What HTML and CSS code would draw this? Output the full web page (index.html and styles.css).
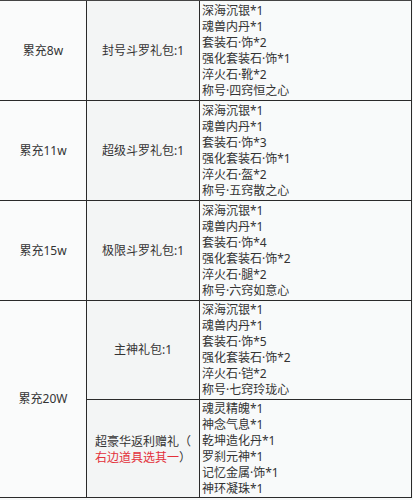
FILE: index.html
```html
<!DOCTYPE html>
<html lang="zh-CN">
<head>
<meta charset="utf-8">
<link rel="stylesheet" href="styles.css">
</head>
<body>
<div class="sheet">
  <div class="cell tier">累充8w</div>
  <div class="cell pack">封号斗罗礼包:1</div>
  <div class="cell items">
    <div>深海沉银*1</div>
    <div>魂兽内丹*1</div>
    <div>套装石·饰*2</div>
    <div>强化套装石·饰*1</div>
    <div>淬火石·靴*2</div>
    <div>称号·四窍恒之心</div>
  </div>

  <div class="cell tier">累充11w</div>
  <div class="cell pack">超级斗罗礼包:1</div>
  <div class="cell items">
    <div>深海沉银*1</div>
    <div>魂兽内丹*1</div>
    <div>套装石·饰*3</div>
    <div>强化套装石·饰*1</div>
    <div>淬火石·盔*2</div>
    <div>称号·五窍散之心</div>
  </div>

  <div class="cell tier">累充15w</div>
  <div class="cell pack">极限斗罗礼包:1</div>
  <div class="cell items">
    <div>深海沉银*1</div>
    <div>魂兽内丹*1</div>
    <div>套装石·饰*4</div>
    <div>强化套装石·饰*2</div>
    <div>淬火石·腿*2</div>
    <div>称号·六窍如意心</div>
  </div>

  <div class="cell tier tall">累充20W</div>
  <div class="cell pack">主神礼包:1</div>
  <div class="cell items">
    <div>深海沉银*1</div>
    <div>魂兽内丹*1</div>
    <div>套装石·饰*5</div>
    <div>强化套装石·饰*2</div>
    <div>淬火石·铠*2</div>
    <div>称号·七窍玲珑心</div>
  </div>

  <div class="cell pack left">
    <p class="gift">超豪华返利赠礼（<br><span class="red">右边道具选其一</span>）</p>
  </div>
  <div class="cell items">
    <div>魂灵精魄*1</div>
    <div>神念气息*1</div>
    <div>乾坤造化丹*1</div>
    <div>罗刹元神*1</div>
    <div>记忆金属·饰*1</div>
    <div>神环凝珠*1</div>
  </div>
</div>
</body>
</html>
```

FILE: styles.css
```css
html, body {
  margin: 0;
  padding: 0;
  background: #f6f8f8;
}

body {
  font-family: "Noto Sans", "Noto Sans CJK SC", sans-serif;
  font-size: 12px;
  color: #333;
}

.sheet {
  display: grid;
  width: 412px;
  grid-template-columns: 87px 113px 212px;
  grid-template-rows: 100px 100px 100px 99px 98px;
  border-top: 1px solid #444;
}

.cell {
  box-sizing: border-box;
  border-right: 1px solid #2a2a2a;
  border-bottom: 1px solid #2a2a2a;
  display: flex;
  align-items: center;
  justify-content: center;
  line-height: 16px;
  white-space: nowrap;
}

.tier {
  background: #fafbfb;
}

.tall {
  grid-row: span 2;
}

.pack {
  background: #f3f5f5;
}

.pack.left {
  justify-content: flex-start;
  padding: 2px 0 0 8px;
}

.gift {
  margin: 0;
  line-height: 16px;
}

.red {
  color: #e3303a;
}

.items {
  flex-direction: column;
  align-items: flex-start;
  justify-content: center;
  padding-left: 2px;
  background: #f8fafa;
}
```
